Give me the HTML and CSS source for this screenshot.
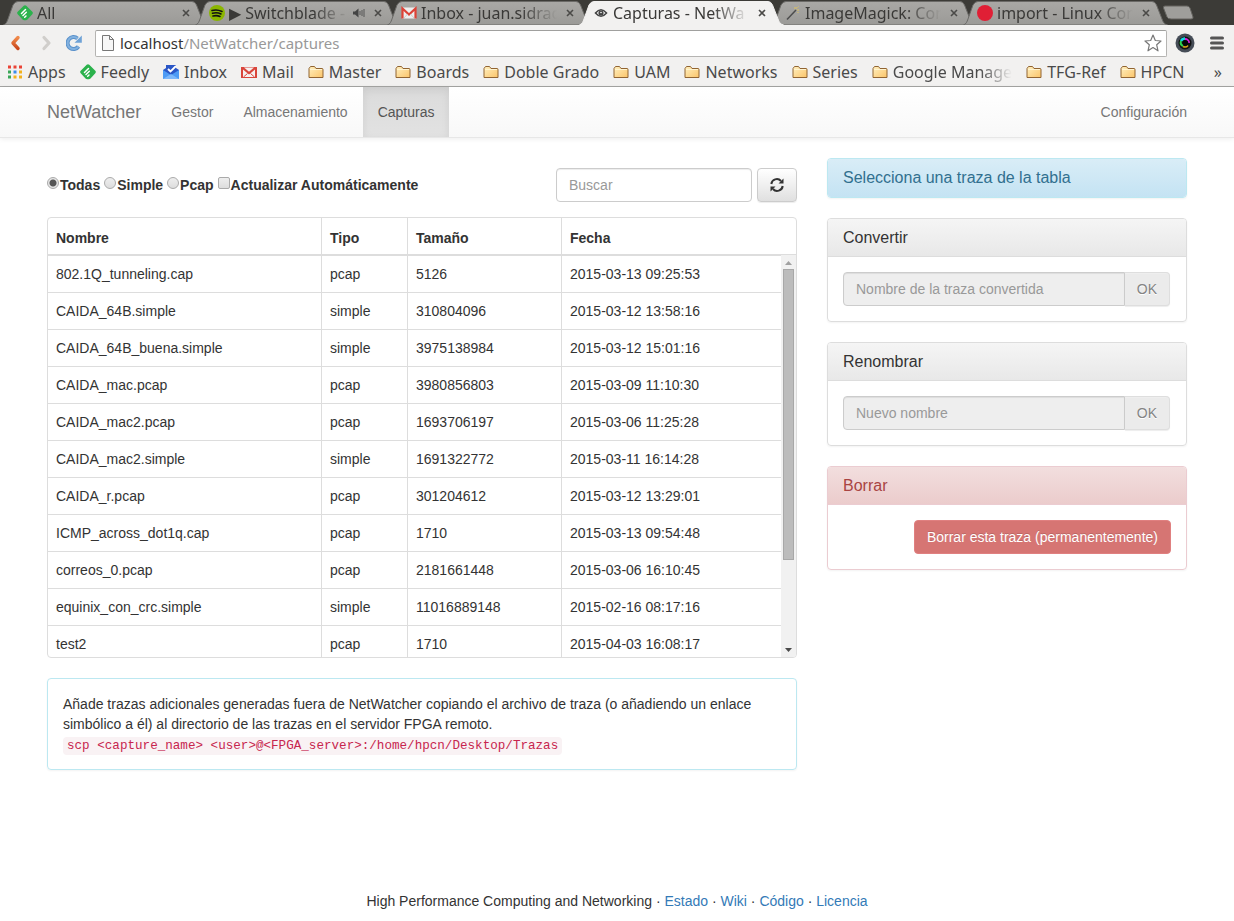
FILE: index.html
```html
<!DOCTYPE html>
<html lang="es">
<head>
<meta charset="utf-8">
<title>Capturas - NetWatcher</title>
<link rel="stylesheet" href="styles.css">
</head>
<body>
<svg class="defs" width="0" height="0" aria-hidden="true">
  <defs>
    <linearGradient id="tabgrad" x1="0" y1="0" x2="0" y2="1"><stop offset="0" stop-color="#a9a8a5"/><stop offset="1" stop-color="#9b9a97"/></linearGradient>
    <linearGradient id="foldgrad" x1="0" y1="0" x2="1" y2="1"><stop offset="0" stop-color="#fff0c0"/><stop offset="1" stop-color="#fbc469"/></linearGradient>
    <linearGradient id="backgrad" x1="0" y1="0" x2="0" y2="1"><stop offset="0" stop-color="#f08a4b"/><stop offset="1" stop-color="#c9481c"/></linearGradient>
    <symbol id="tab" viewBox="0 0 206 25"><path d="M0.5 25C3 24 4 22 5 19L10 5Q12 1.500 15 1.500H189Q192 1.500 193.500 5L199 19C200 22 201 24 204.500 25Z"/></symbol>
    <symbol id="feedly" viewBox="0 0 16 16"><path d="M6.700.8Q8 -.3 9.300.8L15.300 6.800Q16.400 8 15.300 9.200L10.500 14.500Q9.800 15.300 8.800 15.300H7.200Q6.200 15.300 5.500 14.500L.7 9.200Q-.4 8 .7 6.800Z" fill="#2bb24c"/><path d="M4.500 8.500 8.500 4.500M6 10.500 9.300 7.300M7.700 12.200 9 11" stroke="#fff" stroke-width="1.500" fill="none" stroke-linecap="round"/></symbol>
    <symbol id="gmail" viewBox="0 0 16 16"><path d="M1 2.500H15V13.500H1Z" fill="#eee"/><path d="M1.500 13.500V3.500L8 9.500 14.500 3.500V13.500" fill="none" stroke="#dd4237" stroke-width="2.200"/><path d="M3 13 6.500 9M13 13 9.500 9" stroke="#ccc"/></symbol>
    <symbol id="gmailred" viewBox="0 0 16 16"><path d="M0 3H16V14H0Z" fill="#d9453b"/><path d="M2 5.500 8 10.500 14 5.500V13H2Z" fill="#f6f0ef"/><path d="M3 3.500H13L8 7.800Z" fill="#f6f0ef"/><path d="M2.500 13 6.500 9.500M13.500 13 9.500 9.500" stroke="#d9453b"/></symbol>
    <symbol id="folder" viewBox="0 0 16 16"><path d="M1 13.500V4.500L2.500 2.500H6.500L8 4.500H14Q15 4.500 15 5.500V13.500Z" fill="url(#foldgrad)" stroke="#916432"/><path d="M2 5.500H14" stroke="#fff4cf"/></symbol>
    <symbol id="close" viewBox="0 0 8 8"><path d="M1 1 7 7M7 1 1 7" stroke="#4b4a48" stroke-width="1.600"/></symbol>
  </defs>
</svg>

<div class="browser">
  <div class="tabs">
    <div class="tab"><svg class="shape"><use href="#tab"/></svg><svg class="ico"><use href="#feedly"/></svg><span class="tabtext">All</span><button class="x" aria-label="Cerrar"><svg><use href="#close"/></svg></button></div>
    <div class="tab"><svg class="shape"><use href="#tab"/></svg><svg class="ico" viewBox="0 0 16 16"><circle cx="8" cy="8" r="8" fill="#8bb600"/><path d="M3 5.500Q8 4 13 6.500M3.500 8.300Q8 7 12 9M4 11Q8 10 11 11.500" stroke="#111" stroke-width="1.600" fill="none" stroke-linecap="round"/></svg><span class="tabtext">▶ Switchblade -</span><svg class="sound" viewBox="0 0 12 10"><path d="M0 3.500H2L5.500.5V9.500L2 6.500H0Z" fill="#444"/><path d="M7 3V7M9 2V8M11 1V9" stroke="#555"/></svg><button class="x" aria-label="Cerrar"><svg><use href="#close"/></svg></button></div>
    <div class="tab"><svg class="shape"><use href="#tab"/></svg><svg class="ico"><use href="#gmail"/></svg><span class="tabtext">Inbox - juan.sidrac</span><button class="x" aria-label="Cerrar"><svg><use href="#close"/></svg></button></div>
    <div class="tab active"><svg class="shape"><use href="#tab"/></svg><svg class="ico" viewBox="0 0 16 16"><path d="M2.500 8Q8 1.500 13.500 8Q8 14.500 2.500 8Z" fill="#fff" stroke="#444" stroke-width="1.600"/><circle cx="8" cy="8" r="2.600" fill="#444"/><circle cx="8" cy="7.500" r=".8" fill="#fff"/></svg><span class="tabtext">Capturas - NetWa</span><button class="x" aria-label="Cerrar"><svg><use href="#close"/></svg></button></div>
    <div class="tab"><svg class="shape"><use href="#tab"/></svg><svg class="ico" viewBox="0 0 16 16"><path d="M2 14.500 11 5" stroke="#4d4d4d" stroke-width="1.500"/><path d="M11 2V4M14 5H12M13.500 1.500 12.500 2.500M9 3H10M13 7V8" stroke="#e0c45c"/></svg><span class="tabtext">ImageMagick: Con</span><button class="x" aria-label="Cerrar"><svg><use href="#close"/></svg></button></div>
    <div class="tab"><svg class="shape"><use href="#tab"/></svg><svg class="ico" viewBox="0 0 16 16"><circle cx="8" cy="8" r="8" fill="#e01f35"/></svg><span class="tabtext">import - Linux Con</span><button class="x" aria-label="Cerrar"><svg><use href="#close"/></svg></button></div>
    <button class="newtab" aria-label="Nueva pestaña"><svg viewBox="0 0 32 16"><path d="M3 1H25Q27 1 28 3L31 12Q31.500 14 29 14H9Q6 14 5 12L1.500 3Q1 1 3 1Z" fill="#9f9e9b" stroke="#64635f"/></svg></button>
  </div>
  <div class="toolbar">
    <button class="tool" aria-label="Atrás"><svg viewBox="0 0 16 20"><path d="M10 4.500 5 10 10 15.500" fill="none" stroke="url(#backgrad)" stroke-width="3.400" stroke-linecap="round" stroke-linejoin="round"/></svg></button>
    <button class="tool" aria-label="Adelante"><svg viewBox="0 0 16 20"><path d="M7 4.500 12 10 7 15.500" fill="none" stroke="#d0cecb" stroke-width="3.200" stroke-linecap="round" stroke-linejoin="round"/></svg></button>
    <button class="tool" aria-label="Recargar"><svg viewBox="0 0 16 20"><path d="M12.500 13.500A6 6 0 1 1 11.500 5.500" fill="none" stroke="#5b92cb" stroke-width="4"/><path d="M12.500 13.500A6 6 0 1 1 11.500 5.500" fill="none" stroke="#82b1df" stroke-width="2"/><path d="M15.800 2.500V9.700H8.500Z" fill="#6fa2d6"/></svg></button>
    <div class="omnibox">
      <svg class="page" viewBox="0 0 12 16"><path d="M.5.5H7.500L11.500 4.500V15.500H.5Z" fill="#f7f7f7" stroke="#777"/><path d="M7.500.5V4.500H11.500" fill="none" stroke="#777"/></svg>
      <span class="url"><b>localhost</b>/NetWatcher/captures</span>
      <svg class="star" viewBox="0 0 18 18"><path d="M9 1 11.300 6.500 17 7 12.700 10.800 14 16.800 9 13.600 4 16.800 5.300 10.800 1 7 6.700 6.500Z" fill="#fff" stroke="#777" stroke-width="1.200" stroke-linejoin="round"/></svg>
    </div>
    <svg class="lens" viewBox="0 0 20 20"><circle cx="10" cy="10" r="9.500" fill="#464d57"/><circle cx="10" cy="10" r="6.500" fill="#111"/><path d="M6 8A4.500 4.500 0 0 1 10 5.500" stroke="#12d6e4" stroke-width="2.500" fill="none"/><path d="M10 6A4 4 0 0 1 14 10" stroke="#d91ee0" stroke-width="2" fill="none"/><path d="M6 8A4 4 0 0 0 8 13" stroke="#2bd34d" stroke-width="2" fill="none"/><path d="M8 13.500A4 4 0 0 0 13 12.500" stroke="#d6a31c" stroke-width="1.500" fill="none"/><circle cx="10.500" cy="10" r="2.800" fill="#05070b"/></svg>
    <button class="menu" aria-label="Menú"><svg viewBox="0 0 14 14"><path d="M1.500 2H12.500M1.500 7H12.500M1.500 12H12.500" stroke="#555" stroke-width="3" stroke-linecap="round"/></svg></button>
  </div>
  <div class="bookmarks">
    <a href="#"><svg class="ico" viewBox="0 0 16 16"><path d="M1 3H4M6.500 3H9.500M12 3H15" stroke="#ea4335" stroke-width="3"/><path d="M1 8H4" stroke="#3aa757" stroke-width="3"/><path d="M6.500 8H9.500" stroke="#3b8bea" stroke-width="3"/><path d="M12 8H15" stroke="#f3b11c" stroke-width="3"/><path d="M1 13H4" stroke="#3aa757" stroke-width="3"/><path d="M6.500 13H9.500M12 13H15" stroke="#f3b11c" stroke-width="3"/></svg>Apps</a>
    <a href="#"><svg class="ico"><use href="#feedly"/></svg>Feedly</a>
    <a href="#"><svg class="ico" viewBox="0 0 16 16"><path d="M0 6 3 4V1H13V4L16 6V15H0Z" fill="#2a56c6"/><path d="M0 6 8 11 16 6V15H0Z" fill="#4d9bf5"/><path d="M0 15 8 10 16 15Z" fill="#7db8fb"/><path d="M5 5 7.500 7.500 13 2" fill="none" stroke="#fff" stroke-width="1.800"/></svg>Inbox</a>
    <a href="#"><svg class="ico"><use href="#gmailred"/></svg>Mail</a>
    <a href="#"><svg class="ico"><use href="#folder"/></svg>Master</a>
    <a href="#"><svg class="ico"><use href="#folder"/></svg>Boards</a>
    <a href="#"><svg class="ico"><use href="#folder"/></svg>Doble Grado</a>
    <a href="#"><svg class="ico"><use href="#folder"/></svg>UAM</a>
    <a href="#"><svg class="ico"><use href="#folder"/></svg>Networks</a>
    <a href="#"><svg class="ico"><use href="#folder"/></svg>Series</a>
    <a href="#" class="long"><svg class="ico"><use href="#folder"/></svg><span>Google Manage</span></a>
    <a href="#"><svg class="ico"><use href="#folder"/></svg>TFG-Ref</a>
    <a href="#"><svg class="ico"><use href="#folder"/></svg>HPCN</a>
    <button class="more" aria-label="Más marcadores">»</button>
  </div>
</div>

<nav class="navbar">
  <div class="container navrow">
    <a class="brand" href="#">NetWatcher</a>
    <a class="navlink" href="#">Gestor</a>
    <a class="navlink" href="#">Almacenamiento</a>
    <a class="navlink current" href="#">Capturas</a>
    <a class="navlink right" href="#">Configuración</a>
  </div>
</nav>

<main class="container columns">
  <section class="left">
    <div class="controls">
      <div class="filters">
        <label><input type="radio" name="tipo" checked>Todas</label>
        <label><input type="radio" name="tipo">Simple</label>
        <label><input type="radio" name="tipo">Pcap</label>
        <label><input type="checkbox">Actualizar Automáticamente</label>
      </div>
      <input class="field search" type="text" placeholder="Buscar" aria-label="Buscar">
      <button class="btn refresh" aria-label="Actualizar"><svg viewBox="0 0 14 14"><path d="M1.300 6A5.600 5.600 0 0 1 11 3M12.700 8A5.600 5.600 0 0 1 3 11" fill="none" stroke="#333" stroke-width="2"/><path d="M13.500.5V5.500H8.500ZM.5 13.500V8.500H5.500Z" fill="#333"/></svg></button>
    </div>
    <div class="tablebox">
      <table>
        <colgroup><col class="c1"><col class="c2"><col class="c3"><col></colgroup>
        <thead><tr><th>Nombre</th><th>Tipo</th><th>Tamaño</th><th>Fecha</th></tr></thead>
        <tbody>
          <tr><td>802.1Q_tunneling.cap</td><td>pcap</td><td>5126</td><td>2015-03-13 09:25:53</td></tr>
          <tr><td>CAIDA_64B.simple</td><td>simple</td><td>310804096</td><td>2015-03-12 13:58:16</td></tr>
          <tr><td>CAIDA_64B_buena.simple</td><td>simple</td><td>3975138984</td><td>2015-03-12 15:01:16</td></tr>
          <tr><td>CAIDA_mac.pcap</td><td>pcap</td><td>3980856803</td><td>2015-03-09 11:10:30</td></tr>
          <tr><td>CAIDA_mac2.pcap</td><td>pcap</td><td>1693706197</td><td>2015-03-06 11:25:28</td></tr>
          <tr><td>CAIDA_mac2.simple</td><td>simple</td><td>1691322772</td><td>2015-03-11 16:14:28</td></tr>
          <tr><td>CAIDA_r.pcap</td><td>pcap</td><td>301204612</td><td>2015-03-12 13:29:01</td></tr>
          <tr><td>ICMP_across_dot1q.cap</td><td>pcap</td><td>1710</td><td>2015-03-13 09:54:48</td></tr>
          <tr><td>correos_0.pcap</td><td>pcap</td><td>2181661448</td><td>2015-03-06 16:10:45</td></tr>
          <tr><td>equinix_con_crc.simple</td><td>simple</td><td>11016889148</td><td>2015-02-16 08:17:16</td></tr>
          <tr><td>test2</td><td>pcap</td><td>1710</td><td>2015-04-03 16:08:17</td></tr>
        </tbody>
      </table>
      <div class="scrollbar" aria-hidden="true">
        <svg viewBox="0 0 15 14"><path d="M4 10 7.500 6 11 10Z" fill="#a0a0a0"/></svg>
        <div class="thumb"></div>
        <svg class="down" viewBox="0 0 15 14"><path d="M4 5 7.500 9 11 5Z" fill="#4a4a4a"/></svg>
      </div>
    </div>
    <div class="panel info note">
      <p>Añade trazas adicionales generadas fuera de NetWatcher copiando el archivo de traza (o añadiendo un enlace simbólico a él) al directorio de las trazas en el servidor FPGA remoto.</p>
      <code>scp &lt;capture_name&gt; &lt;user&gt;@&lt;FPGA_server&gt;:/home/hpcn/Desktop/Trazas</code>
    </div>
  </section>

  <aside class="right">
    <div class="panel info"><h3>Selecciona una traza de la tabla</h3></div>
    <div class="panel">
      <h3>Convertir</h3>
      <div class="body group"><input class="field" type="text" placeholder="Nombre de la traza convertida" aria-label="Nombre de la traza convertida" disabled><button class="btn ok" disabled>OK</button></div>
    </div>
    <div class="panel">
      <h3>Renombrar</h3>
      <div class="body group"><input class="field" type="text" placeholder="Nuevo nombre" aria-label="Nuevo nombre" disabled><button class="btn ok" disabled>OK</button></div>
    </div>
    <div class="panel danger">
      <h3>Borrar</h3>
      <div class="body end"><button class="btn delete" disabled>Borrar esta traza (permanentemente)</button></div>
    </div>
  </aside>
</main>

<footer>High Performance Computing and Networking · <a href="#">Estado</a> · <a href="#">Wiki</a> · <a href="#">Código</a> · <a href="#">Licencia</a></footer>
</body>
</html>
```
FILE: styles.css
```css
* { box-sizing: border-box; }
body { margin: 0; min-height: 100vh; display: flex; flex-direction: column; background: #fff; color: #333; font: 14px/20px "Liberation Sans", Arial, sans-serif; }
button { font: inherit; padding: 0; border: 0; background: none; }
a { color: #337ab7; text-decoration: none; }
h3, p { margin: 0; }
svg { display: block; flex: none; }
.defs { position: absolute; }

/* Browser frame */
.browser { background: #f2f1f0; border-bottom: 1px solid #a5a5a3; font: 16px/20px "Noto Sans", sans-serif; color: #4a4a4a; }
.tabs { display: flex; height: 25px; padding-left: 3px; background: #3c3b37; overflow: hidden; }
.tab { position: relative; flex: 0 0 192px; min-width: 0; height: 25px; display: flex; align-items: center; gap: 4px; padding-left: 14px; color: #3a3937; }
.shape { position: absolute; left: 0; top: 0; width: 206px; height: 25px; fill: url(#tabgrad); stroke: #6b6a67; }
.tab.active { z-index: 1; }
.active .shape { fill: #f2f1f0; stroke: #f2f1f0; }
.ico { width: 16px; height: 16px; position: relative; }
.tabtext { position: relative; flex: 1; min-width: 0; overflow: hidden; white-space: nowrap; -webkit-mask-image: linear-gradient(to left, transparent, #000 36px); mask-image: linear-gradient(to left, transparent, #000 36px); }
.x { position: relative; flex: none; width: 18px; height: 16px; display: flex; align-items: center; justify-content: center; }
.x svg { width: 8px; height: 8px; }
.sound { position: relative; width: 12px; height: 10px; }
.newtab { margin-left: 7px; }
.newtab svg { width: 32px; height: 16px; }
.toolbar { display: flex; align-items: center; height: 36px; padding: 0 10px 0 8px; }
.tool { flex: none; width: 29px; margin: 0; }
.tool svg { width: 16px; height: 20px; }
.omnibox { flex: 1; height: 27px; display: flex; align-items: center; gap: 6px; padding: 0 4px 0 6px; background: #fff; border: 1px solid #b5b4b2; border-top-color: #a0a09e; border-radius: 2px; }
.page { width: 12px; height: 16px; }
.url { flex: 1; color: #999; font-size: 15px; }
.url b { font-weight: 400; color: #333; }
.star { width: 18px; height: 18px; }
.lens { width: 20px; height: 20px; margin: 0 15px 0 8px; }
.menu svg { width: 14px; height: 14px; }
.bookmarks { display: flex; align-items: center; gap: 14px; height: 25px; padding: 0 12px 4px 7px; overflow: hidden; }
.bookmarks a { display: flex; align-items: center; gap: 5px; color: #4a4a4a; white-space: nowrap; }
.long span { -webkit-mask-image: linear-gradient(to left, transparent, #000 32px); mask-image: linear-gradient(to left, transparent, #000 32px); }
.more { margin-left: auto; color: #4a4a4a; }

/* Site navigation */
.container { width: 100%; max-width: 1170px; margin: 0 auto; padding: 0 15px; }
.navbar { border-bottom: 1px solid #e7e7e7; background: linear-gradient(#fff, #f8f8f8); box-shadow: 0 1px 5px rgba(0,0,0,.075); }
.navrow { display: flex; height: 50px; }
.navrow a { padding: 15px; color: #777; }
.navrow .brand { padding-left: 0; font-size: 18px; }
.navrow .current { color: #555; background: linear-gradient(#dbdbdb, #e2e2e2); box-shadow: inset 0 3px 9px rgba(0,0,0,.075); }
.navrow .right { margin-left: auto; padding-right: 0; }

/* Content */
.columns { display: grid; grid-template-columns: minmax(0, 25fr) minmax(0, 12fr); gap: 30px; padding-top: 20px; }
.controls { display: flex; align-items: center; gap: 5px; padding: 10px 0 15px; }
.filters { display: flex; flex: 1; gap: 4px; font-weight: 700; white-space: nowrap; }
.filters label { display: flex; }
.filters input { appearance: none; width: 12px; height: 12px; margin: 2px 1px 0 0; border: 1px solid #aaa; border-radius: 2px; background: linear-gradient(#eee, #ddd); }
.filters input[type=radio] { border-radius: 50%; }
.filters input[type=radio]:checked { background: radial-gradient(circle, #555 0 3px, #e6e6e6 4px); }
.field { height: 34px; min-width: 0; padding: 6px 12px; border: 1px solid #ccc; border-radius: 4px; background: #fff; font: inherit; box-shadow: inset 0 1px 1px rgba(0,0,0,.075); }
.field::placeholder { color: #999; opacity: 1; }
.field:disabled { background: #eee; }
.search { width: 196px; }
.btn { height: 34px; padding: 0 12px; border: 1px solid #ccc; border-radius: 4px; background: linear-gradient(#fff, #e0e0e0); box-shadow: inset 0 1px 0 rgba(255,255,255,.15), 0 1px 1px rgba(0,0,0,.075); }
.refresh { width: 40px; }
.refresh svg { width: 14px; height: 14px; }
.tablebox { position: relative; height: 441px; border: 1px solid #ddd; border-radius: 4px; overflow: hidden; margin-bottom: 20px; }
table { width: 100%; table-layout: fixed; border-collapse: separate; border-spacing: 0; }
.c1 { width: 274px; }
.c2 { width: 86px; }
.c3 { width: 154px; }
th, td { padding: 8px; text-align: left; border-right: 1px solid #ddd; border-top: 1px solid #ddd; }
th { padding: 10px 8px 6px; border-top: 0; border-bottom: 2px solid #ddd; }
tbody tr:first-child td { border-top: 0; }
th:last-child, td:last-child { border-right: 0; }
.scrollbar { position: absolute; top: 37px; right: 0; bottom: 0; width: 15px; display: flex; flex-direction: column; background: #f1f1f1; }
.scrollbar svg { width: 15px; height: 14px; }
.thumb { width: 11px; height: 291px; margin-left: 2px; background: #bcbcbc; border: 1px solid #a8a8a8; }
.scrollbar .down { margin-top: auto; }
.panel { margin-bottom: 20px; border: 1px solid #ddd; border-radius: 4px; box-shadow: 0 1px 2px rgba(0,0,0,.05); }
.panel h3 { padding: 10px 15px; font-size: 16px; line-height: 18px; font-weight: 400; border-radius: 3px; background: linear-gradient(#f5f5f5, #e8e8e8); }
.panel h3:not(:last-child) { padding-bottom: 9px; border-bottom: 1px solid #ddd; border-radius: 3px 3px 0 0; }
.info { border-color: #bce8f1; }
.panel.info h3 { color: #31708f; background: linear-gradient(#d9edf7, #c4e3f3); }
.danger { border-color: #ebccd1; }
.panel.danger h3 { color: #a94442; background: linear-gradient(#f2dede, #ebcccc); border-color: #ebccd1; }
.note { padding: 15px; }
code { padding: 2px 4px; border-radius: 4px; background: #f9f2f4; color: #c7254e; font-family: "Liberation Mono", monospace; font-size: 90%; line-height: 1; }
.body { padding: 15px; }
.group { display: flex; padding-right: 16px; }
.group .field { flex: 1; border-radius: 4px 0 0 4px; }
.ok { border-left: 0; border-color: #dedede; border-radius: 0 4px 4px 0; background: #ebebeb; color: #848484; text-shadow: 0 1px 0 #fff; }
.end { display: flex; justify-content: flex-end; }
.delete { border-color: #e08080; background: #d67573; color: #fff; text-shadow: 0 -1px 0 rgba(0,0,0,.15); box-shadow: none; }
footer { margin-top: auto; padding-bottom: 10px; text-align: center; }
```
